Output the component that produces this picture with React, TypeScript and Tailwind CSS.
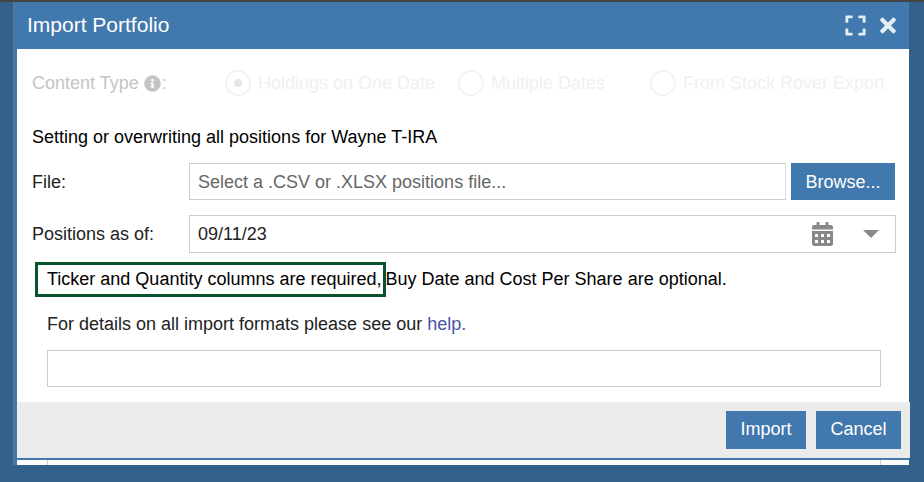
import { FaCalendarAlt, FaExpand, FaInfoCircle, FaTimes } from 'react-icons/fa';

const labelClass = 'w-[157px] shrink-0 text-[18px] text-[#222]';

function RadioOption({ label, checked, width }: { label: string; checked?: boolean; width: string }) {
  return (
    <div className={`flex items-center gap-[7px] ${width}`}>
      <span className="flex h-[26px] w-[26px] items-center justify-center rounded-full border-[2px] border-[#f3f3f3]">
        {checked ? <span className="h-[8px] w-[8px] rounded-full bg-[#e6e6e6]" /> : null}
      </span>
      <span className="text-[18px] whitespace-nowrap text-[#f0f0f0]">{label}</span>
    </div>
  );
}

export default function App() {
  return (
    <div className="h-[482px] w-[924px] overflow-hidden border-t-[2px] border-[#444] bg-[#34618c] font-['Liberation_Sans',Arial,sans-serif]">
      <div className="ml-[13px] h-[463px] w-[897px] border-l border-[#6b7280]">
        <header className="flex h-[47px] w-[895px] items-center justify-between bg-[#4178ad] pr-[11px] pl-[13px] text-white">
          <h1 className="pb-[2px] text-[21px]">Import Portfolio</h1>
          <div className="flex items-center gap-[11px] text-[#e4ecf4]">
            <FaExpand className="h-[23px] w-[23px]" />
            <FaTimes className="h-[23px] w-[20px]" />
          </div>
        </header>

        <div className="flex h-[416px] w-[895px] flex-col border-l-[3px] border-[#4178ad] bg-white">
          <div className="flex h-[353px] flex-col pr-[14px] pl-[15px]">
            <div className="mt-[21px] flex h-[26px] items-center">
              <div className="flex w-[193px] shrink-0 items-center text-[18px] text-[#c4c4c4]">
                Content Type
                <FaInfoCircle className="mr-[1px] ml-[5px] h-[17px] w-[17px]" />:
              </div>
              <RadioOption label="Holdings on One Date" checked width="w-[233px]" />
              <RadioOption label="Multiple Dates" width="w-[192px]" />
              <RadioOption label="From Stock Rover Export" width="" />
            </div>

            <p className="mt-[31px] h-[20px] text-[18px] leading-[20px] text-black">
              Setting or overwriting all positions for Wayne T-IRA
            </p>

            <div className="mt-[16px] flex h-[37px] items-center">
              <span className={`${labelClass} pt-[1px]`}>File:</span>
              <div className="flex h-full flex-1 items-center border border-[#ccc] border-r-[#ddd] px-[8px] pt-[1px] text-[18px] text-[#666]">
                Select a .CSV or .XLSX positions file...
              </div>
              <button
                type="button"
                className="ml-[5px] h-full w-[104px] bg-[#4178ad] pt-[1px] text-[18px] text-white"
              >
                Browse...
              </button>
            </div>

            <div className="mt-[15px] flex h-[38px] items-center">
              <span className={labelClass}>Positions as of:</span>
              <div className="mr-[-1px] flex h-full flex-1 items-center border border-[#ccc] pr-[16px] pl-[8px] text-[18px] text-[#222]">
                <span className="flex-1">09/11/23</span>
                <FaCalendarAlt className="h-[24px] w-[21px] text-[#888]" />
                <span className="ml-[30px] h-0 w-0 border-x-[8px] border-t-[8px] border-x-transparent border-t-[#888]" />
              </div>
            </div>

            <div className="mt-[9px] flex h-[35px] items-center text-[18px] whitespace-nowrap text-black">
              <span className="ml-[3px] flex h-full items-center border-[3px] border-[#07532e] pr-[1px] pl-[9px]">
                Ticker and Quantity columns are required,
              </span>
              <span>Buy Date and Cost Per Share are optional.</span>
            </div>

            <p className="mt-[17px] ml-[15px] h-[20px] text-[18px] leading-[20px] text-[#222]">
              For details on all import formats please see our{' '}
              <span className="text-[#4a55a8]">help.</span>
            </p>

            <div className="mt-[16px] mr-[14px] ml-[15px] h-[37px] border border-[#ccc]" />
          </div>

          <footer className="flex h-[56px] w-[893px] items-center justify-end gap-[10px] bg-[#ebebeb] pr-[9px]">
            <button type="button" className="mt-[-1px] h-[38px] w-[80px] bg-[#4178ad] text-[18px] text-white">
              Import
            </button>
            <button type="button" className="mt-[-1px] h-[38px] w-[85px] bg-[#4178ad] text-[18px] text-white">
              Cancel
            </button>
          </footer>
          <div className="h-[2px] bg-[#4178ad]" />
          <div className="ml-[30px] h-[5px] w-[834px] border-x border-[#ccc]" />
        </div>
      </div>
    </div>
  );
}
